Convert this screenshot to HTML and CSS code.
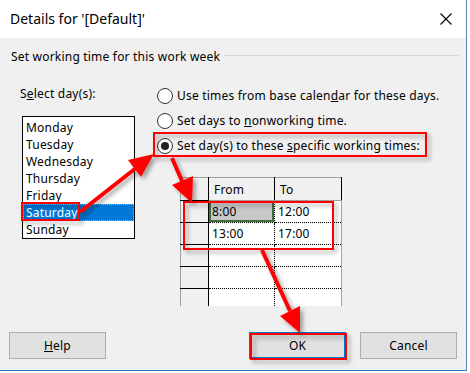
FILE: index.html
```html
<!DOCTYPE html>
<html lang="en">
<head>
  <meta charset="UTF-8" />
  <title>Details for '[Default]'</title>
  <link rel="stylesheet" href="styles.css">
</head>
<body>

  <div class="dialog">
    <!-- Title bar -->
    <div class="titlebar">
      <span class="title">Details for '[Default]'</span>
      <svg class="close" width="12" height="12" viewBox="0 0 12 12">
        <path d="M0.5 0.5 L11.5 11.5 M11.5 0.5 L0.5 11.5" stroke="#000" stroke-width="1.1" fill="none"/>
      </svg>
    </div>

    <div class="content">
      <div class="group-label">
        <span>Set working time for this work week</span>
        <span class="rule"></span>
      </div>

      <div class="main">
        <!-- Day list -->
        <div class="days">
          <div class="days-label">S<u>e</u>lect day(s):</div>
          <ul class="daylist">
            <li>Monday</li>
            <li>Tuesday</li>
            <li>Wednesday</li>
            <li>Thursday</li>
            <li>Friday</li>
            <li class="selected">Saturday</li>
            <li>Sunday</li>
          </ul>
        </div>

        <!-- Options + times grid -->
        <div class="options">
          <div class="radio-row"><span class="radio"></span><span>Use times from base calen<u>d</u>ar for these days.</span></div>
          <div class="radio-row"><span class="radio"></span><span>Set days to <u>n</u>onworking time.</span></div>
          <div class="radio-row"><span class="radio checked"></span><span>Set day(s) to these <u>s</u>pecific working times:</span></div>

          <table class="times">
            <colgroup>
              <col class="c-rh">
              <col class="c-from">
              <col class="c-to">
            </colgroup>
            <tr class="head">
              <th class="rh"></th>
              <th>From</th>
              <th>To</th>
            </tr>
            <tr>
              <td class="rh"></td>
              <td class="from current">8:00</td>
              <td class="to">12:00</td>
            </tr>
            <tr>
              <td class="rh"></td>
              <td class="from">13:00</td>
              <td class="to">17:00</td>
            </tr>
            <tr>
              <td class="rh"></td>
              <td class="from"></td>
              <td class="to"></td>
            </tr>
            <tr>
              <td class="rh"></td>
              <td class="from"></td>
              <td class="to"></td>
            </tr>
            <tr class="last">
              <td class="rh"></td>
              <td class="from"></td>
              <td class="to"></td>
            </tr>
          </table>
        </div>
      </div>

      <!-- Buttons -->
      <div class="buttons">
        <button class="btn"><u>H</u>elp</button>
        <span class="spacer"></span>
        <button class="btn default">OK</button>
        <button class="btn">Cancel</button>
      </div>
    </div>
  </div>

  <!-- Red annotation overlay -->
  <svg class="annot" width="470" height="373" viewBox="0 0 470 373">
    <defs>
      <filter id="shadow" x="-20%" y="-20%" width="140%" height="140%">
        <feDropShadow dx="3" dy="3" stdDeviation="2" flood-color="#000" flood-opacity="0.35"/>
      </filter>
    </defs>
    <g filter="url(#shadow)" fill="none" stroke="#ff0000" stroke-width="2">
      <rect x="22" y="203" width="57" height="17"/>
      <rect x="154" y="133" width="272" height="23"/>
      <rect x="184" y="202" width="149" height="47"/>
      <rect x="251" y="334" width="95" height="25"/>
    </g>
    <g filter="url(#shadow)" stroke="#ff0000" stroke-width="4" fill="#ff0000">
      <line x1="80" y1="212" x2="136" y2="168"/>
      <polygon points="154,154 141,177 128,160" stroke="none"/>
      <line x1="172" y1="158" x2="182" y2="181"/>
      <polygon points="192,203 172,185 193,176" stroke="none"/>
      <line x1="262" y1="250" x2="290" y2="311"/>
      <polygon points="300,333 280,316 300,306" stroke="none"/>
    </g>
  </svg>

</body>
</html>
```

FILE: styles.css
```css
body {
  margin: 0;
  background: #ffffff;
  font-family: "Noto Sans", "Open Sans", sans-serif;
  font-size: 12px;
  letter-spacing: 0.2px;
  color: #000;
  position: relative;
  width: 470px;
  height: 373px;
  overflow: hidden;
}
.dialog {
  width: 466px;
  height: 370px;
  border-right: 1px solid #5a86b8;
  border-bottom: 1px solid #2b79c9;
  display: flex;
  flex-direction: column;
}
/* Title bar */
.titlebar {
  height: 38px;
  background: #fff;
  display: flex;
  align-items: center;
  padding: 0 14px 0 10px;
}
.title {
  font-size: 14px;
  letter-spacing: 0;
  flex: 1;
  margin-top: -1px;
}
.close {
  display: block;
}
/* Body */
.content {
  flex: 1;
  background: #f0f0f0;
  display: flex;
  flex-direction: column;
}
.group-label {
  display: flex;
  align-items: center;
  padding: 9px 7px 0 11px;
  height: 18px;
}
.group-label .rule {
  flex: 1;
  height: 1px;
  background: #d5d5d5;
  margin-left: 4px;
  margin-top: -2px;
}
.main {
  display: flex;
  margin-top: 18px;
}
.days {
  width: 137px;
  padding: 3px 0 0 20px;
}
.days-label {
  height: 16px;
  line-height: 16px;
}
.daylist {
  list-style: none;
  margin: 14px 0 0 2px;
  padding: 2px 0 0;
  width: 111px;
  height: 119px;
  background: #fff;
  border: 1px solid #000;
}
.daylist li {
  height: 17px;
  line-height: 17px;
  padding-left: 3px;
}
.daylist li.selected {
  background: #0078d7;
  color: #fff;
  outline: 1px dotted #f7a13c;
  outline-offset: -1px;
}
/* Radio options */
.options {
  flex: 1;
}
.radio-row {
  height: 25px;
  display: flex;
  align-items: center;
}
.radio {
  width: 14px;
  height: 14px;
  border: 1px solid #333;
  border-radius: 50%;
  background: #fff;
  margin: 0 4px 0 0;
  position: relative;
}
.radio.checked::after {
  content: "";
  position: absolute;
  left: 3px;
  top: 3px;
  width: 8px;
  height: 8px;
  border-radius: 50%;
  background: #222;
}
/* Times grid */
.times {
  margin: 19px 0 0 23px;
  width: 161px;
  border-collapse: collapse;
  border-left: 1px solid #a0a0a0;
  border-top: 1px solid #a0a0a0;
  table-layout: fixed;
}
.c-rh { width: 28px; }
.c-from { width: 66px; }
.c-to { width: 67px; }
.times th,
.times td {
  padding: 0 0 0 3px;
  text-align: left;
  font-weight: normal;
  height: 21px;
  overflow: hidden;
}
.times th {
  height: 22px;
  background: #f0f0f0;
  border-right: 1px solid #000;
  border-bottom: 1px solid #a0a0a0;
  padding-left: 5px;
}
.times .rh {
  background: #f0f0f0;
  border-right: 1px solid #000;
  border-bottom: 1px solid #000;
}
.times td.from {
  background: #fff;
  border-right: 1px dotted #000;
  border-bottom: 1px dotted #000;
}
.times td.to {
  background: #fff;
  border-right: 1px solid #a0a0a0;
  border-bottom: 1px dotted #000;
}
.times td.current {
  background: #c8c8c8;
  box-shadow: inset 0 0 0 2px #3d6f3d;
}
.times tr.last td {
  height: 17px;
  border-bottom: none;
}
/* Buttons */
.buttons {
  margin-top: auto;
  display: flex;
  gap: 14px;
  padding: 0 9px 11px;
}
.spacer {
  flex: 1;
}
.btn {
  width: 97px;
  height: 27px;
  font-family: inherit;
  font-size: 12px;
  letter-spacing: 0.2px;
  color: #000;
  background: #e1e1e1;
  border: 1px solid #adadad;
  padding: 0;
}
.btn.default {
  border: 2px solid #0078d7;
}
/* Annotation overlay */
.annot {
  position: absolute;
  left: 0;
  top: 0;
  pointer-events: none;
}
```
